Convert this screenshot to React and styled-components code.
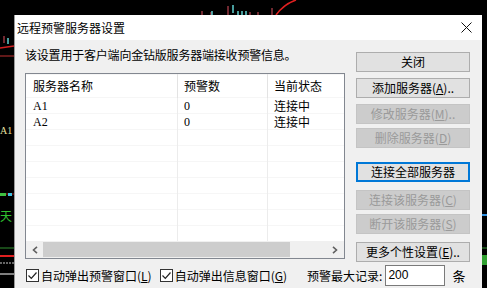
import React from "react";
import styled, { createGlobalStyle } from "styled-components";

const GlobalStyle = createGlobalStyle`
    html, body {
        margin: 0;
        padding: 0;
        background: #000;
        overflow: hidden;
    }
    body {
        font-family: "Noto Sans CJK SC", "Liberation Sans", sans-serif;
        font-size: 12px;
        color: #000;
    }
`;

const Screen = styled.div`
    position: relative;
    width: 487px;
    height: 288px;
    overflow: hidden;
    background: #000;
`;

// chart fragments behind the dialog
const Backdrop = styled.svg`
    position: absolute;
    left: 0;
    top: 0;
`;

const Dialog = styled.div`
    position: relative;
    margin: 15px 0 0 14px;
    width: 468px;
    height: 273px;
    background: #f0f0f0;
    border-left: 1px solid #9a9a9a;
    box-sizing: border-box;
    display: flex;
    flex-direction: column;
`;

const TitleBar = styled.div`
    height: 25px;
    background: #fff;
    display: flex;
    align-items: center;
    justify-content: space-between;
    padding: 0 10px 0 2px;
    font-size: 12px;
    line-height: 25px;
`;

const CloseX = styled.svg`
    display: block;
`;

const Body = styled.div`
    display: grid;
    grid-template-columns: 320px 114px;
    column-gap: 11px;
    padding: 0 0 0 10px;
`;

const LeftCol = styled.div`
    display: flex;
    flex-direction: column;
`;

const Desc = styled.div`
    margin-top: 7px;
    height: 16px;
    line-height: 16px;
    letter-spacing: -0.2px;
`;

const ListBox = styled.div`
    margin-top: 10px;
    height: 186px;
    background: #fff;
    border: 1px solid #828790;
    box-sizing: border-box;
    display: flex;
    flex-direction: column;
    position: relative;
`;

const Table = styled.div`
    flex: 1;
    display: grid;
    grid-template-columns: 152px 90px 1fr;
    grid-auto-rows: 16px;
    grid-template-rows: 24px;
    background-image: linear-gradient(
            to right,
            transparent 151px,
            #ececec 151px,
            #ececec 152px,
            transparent 152px,
            transparent 241px,
            #ececec 241px,
            #ececec 242px,
            transparent 242px
        ),
        repeating-linear-gradient(
            to bottom,
            transparent 0,
            transparent 15px,
            #f6f6f6 15px,
            #f6f6f6 16px
        );
    background-position: 0 0, 0 8px;
`;

const Head = styled.div`
    line-height: 24px;
    padding-left: ${(p) => p.pad || 7}px;
    font-size: 12px;
    border-right: ${(p) => (p.last ? "none" : "1px solid #e3e3e3")};
`;

const Cell = styled.div`
    line-height: 16px;
    padding-left: ${(p) => p.pad || 7}px;
    font-family: ${(p) => (p.mono ? '"Liberation Serif", serif' : "inherit")};
    font-size: 12px;
`;

const HScroll = styled.div`
    height: 17px;
    background: #f0f0f0;
    display: flex;
    align-items: center;
    justify-content: space-between;
`;

const Arrow = styled.svg`
    display: block;
    margin: 0 ${(p) => (p.right ? 6 : 5)}px 0 ${(p) => (p.right ? 5 : 6)}px;
`;

const Thumb = styled.div`
    flex: 1;
    height: 15px;
    margin-right: 37px;
    background: #cdcdcd;
`;

const RightCol = styled.div`
    display: flex;
    flex-direction: column;
    padding-top: 12px;
`;

const Btn = styled.div`
    margin-top: ${(p) => p.gap || 0}px;
    height: 20px;
    box-sizing: border-box;
    border: 1px solid ${(p) => (p.primary ? "#0078d7" : p.disabled ? "#c4c4c4" : "#adadad")};
    background: ${(p) => (p.disabled ? "#cccccc" : "#e1e1e1")};
    color: ${(p) => (p.disabled ? "#9a9a9a" : "#000")};
    display: flex;
    align-items: center;
    justify-content: center;
    font-size: 12px;
    line-height: 18px;
    white-space: nowrap;
    box-shadow: ${(p) => (p.primary ? "inset 0 0 0 1px #0078d7" : "none")};
`;

const Key = styled.span`
    text-decoration: underline;
`;

const Bottom = styled.div`
    display: flex;
    align-items: center;
    height: 22px;
    padding: 2px 0 0 11px;
`;

const Check = styled.label`
    display: flex;
    align-items: center;
    margin-right: ${(p) => p.space}px;
    white-space: nowrap;
`;

const Box = styled.span`
    width: 13px;
    height: 13px;
    box-sizing: border-box;
    border: 1px solid #333;
    background: #fff;
    margin-right: 2px;
    display: flex;
    align-items: center;
    justify-content: center;
`;

const MaxLabel = styled.span`
    white-space: nowrap;
    margin-right: 3px;
`;

const Input = styled.div`
    width: 60px;
    height: 21px;
    box-sizing: border-box;
    border: 1px solid #7a7a7a;
    background: #fff;
    padding-left: 2px;
    font-family: "Liberation Sans", sans-serif;
    font-size: 12px;
    line-height: 19px;
`;

const Unit = styled.span`
    margin-left: 7px;
    font-size: 13px;
`;

const rows = [
    { name: "A1", count: "0", state: "连接中" },
    { name: "A2", count: "0", state: "连接中" },
];

const Label = ({ text, k, tail }) => (
    <span>
        {text}(<Key>{k}</Key>){tail}
    </span>
);

const Tick = () => (
    <svg width="11" height="11" viewBox="0 0 11 11">
        <path d="M1.5 5.5 L4.3 8.3 L9.5 2.5" fill="none" stroke="#222" strokeWidth="1.2" />
    </svg>
);

const App = () => {
    return (
        <>
            <GlobalStyle />
            <Screen>
                <Backdrop width="487" height="288" viewBox="0 0 487 288">
                    <g stroke="#e05060" strokeWidth="1">
                        <line x1="202" y1="11" x2="202" y2="15" />
                        <line x1="211" y1="12" x2="211" y2="15" />
                        <line x1="228" y1="6" x2="228" y2="15" />
                        <line x1="250" y1="12" x2="250" y2="15" />
                        <line x1="258" y1="12" x2="258" y2="15" />
                        <line x1="272" y1="8" x2="272" y2="15" />
                        <line x1="4" y1="36" x2="4" y2="43" />
                    </g>
                    <g stroke="#5fd0d0" strokeWidth="1.5">
                        <line x1="212" y1="11" x2="212" y2="15" />
                        <line x1="233" y1="5" x2="233" y2="13" />
                        <line x1="238" y1="11" x2="238" y2="15" />
                        <line x1="242" y1="11" x2="242" y2="15" />
                        <line x1="246" y1="11" x2="246" y2="15" />
                        <line x1="8" y1="38" x2="8" y2="44" />
                    </g>
                    <path d="M276 15 Q284 4 296 0" fill="none" stroke="#e02020" strokeWidth="1.5" />
                    <line x1="0" y1="48" x2="14" y2="46" stroke="#d02020" strokeWidth="1.5" />
                    <line x1="0" y1="56" x2="14" y2="56" stroke="#c03030" strokeWidth="1" />
                    <text x="0" y="134" fill="#e8e0a0" fontSize="10" fontFamily="Liberation Serif">A1</text>
                    <line x1="0" y1="194" x2="14" y2="194" stroke="#a02020" strokeWidth="1" />
                    <rect x="0" y="193" width="6" height="3" fill="#40c040" />
                    <rect x="8" y="193" width="4" height="3" fill="#40c0e0" />
                    <text x="0" y="221" fill="#30c030" fontSize="12">天</text>
                    <line x1="0" y1="248" x2="14" y2="248" stroke="#309030" strokeWidth="1" />
                    <line x1="0" y1="256" x2="14" y2="256" stroke="#e02020" strokeWidth="2" />
                    <line x1="0" y1="263" x2="14" y2="263" stroke="#ccc" strokeWidth="1" strokeDasharray="2 1" />
                    <line x1="0" y1="274" x2="14" y2="274" stroke="#fff" strokeWidth="1" />
                    <line x1="482" y1="215" x2="487" y2="215" stroke="#3090e0" strokeWidth="2" />
                    <line x1="482" y1="248" x2="487" y2="248" stroke="#309030" strokeWidth="1" />
                    <rect x="482" y="255" width="5" height="10" fill="#30a030" />
                </Backdrop>
                <Dialog>
                    <TitleBar>
                        <span>远程预警服务器设置</span>
                        <CloseX width="11" height="11" viewBox="0 0 11 11">
                            <path d="M0.5 0.5 L10.5 10.5 M10.5 0.5 L0.5 10.5" stroke="#111" strokeWidth="1" />
                        </CloseX>
                    </TitleBar>
                    <Body>
                        <LeftCol>
                            <Desc>该设置用于客户端向金钻版服务器端接收预警信息。</Desc>
                            <ListBox>
                                <Table>
                                    <Head>服务器名称</Head>
                                    <Head pad={6}>预警数</Head>
                                    <Head pad={6} last>当前状态</Head>
                                    {rows.map((r) => (
                                        <React.Fragment key={r.name}>
                                            <Cell mono>{r.name}</Cell>
                                            <Cell pad={6} mono>{r.count}</Cell>
                                            <Cell pad={6}>{r.state}</Cell>
                                        </React.Fragment>
                                    ))}
                                </Table>
                                <HScroll>
                                    <Arrow width="6" height="8" viewBox="0 0 6 8">
                                        <path d="M5 0.8 L1.5 4 L5 7.2" fill="none" stroke="#606060" strokeWidth="1.6" />
                                    </Arrow>
                                    <Thumb />
                                    <Arrow right width="6" height="8" viewBox="0 0 6 8">
                                        <path d="M1 0.8 L4.5 4 L1 7.2" fill="none" stroke="#606060" strokeWidth="1.6" />
                                    </Arrow>
                                </HScroll>
                            </ListBox>
                        </LeftCol>
                        <RightCol>
                            <Btn>关闭</Btn>
                            <Btn gap={6}>
                                <Label text="添加服务器" k="A" tail=".." />
                            </Btn>
                            <Btn gap={6} disabled>
                                <Label text="修改服务器" k="M" tail=".." />
                            </Btn>
                            <Btn gap={4} disabled>
                                <Label text="删除服务器" k="D" />
                            </Btn>
                            <Btn gap={14} primary>
                                连接全部服务器
                            </Btn>
                            <Btn gap={8} disabled>
                                <Label text="连接该服务器" k="C" />
                            </Btn>
                            <Btn gap={4} disabled>
                                <Label text="断开该服务器" k="S" />
                            </Btn>
                            <Btn gap={8}>
                                <Label text="更多个性设置" k="E" tail=".." />
                            </Btn>
                        </RightCol>
                    </Body>
                    <Bottom>
                        <Check space={8}>
                            <Box>
                                <Tick />
                            </Box>
                            <Label text="自动弹出预警窗口" k="L" />
                        </Check>
                        <Check space={20}>
                            <Box>
                                <Tick />
                            </Box>
                            <Label text="自动弹出信息窗口" k="G" />
                        </Check>
                        <MaxLabel>预警最大记录:</MaxLabel>
                        <Input>200</Input>
                        <Unit>条</Unit>
                    </Bottom>
                </Dialog>
            </Screen>
        </>
    );
};

export default App;
